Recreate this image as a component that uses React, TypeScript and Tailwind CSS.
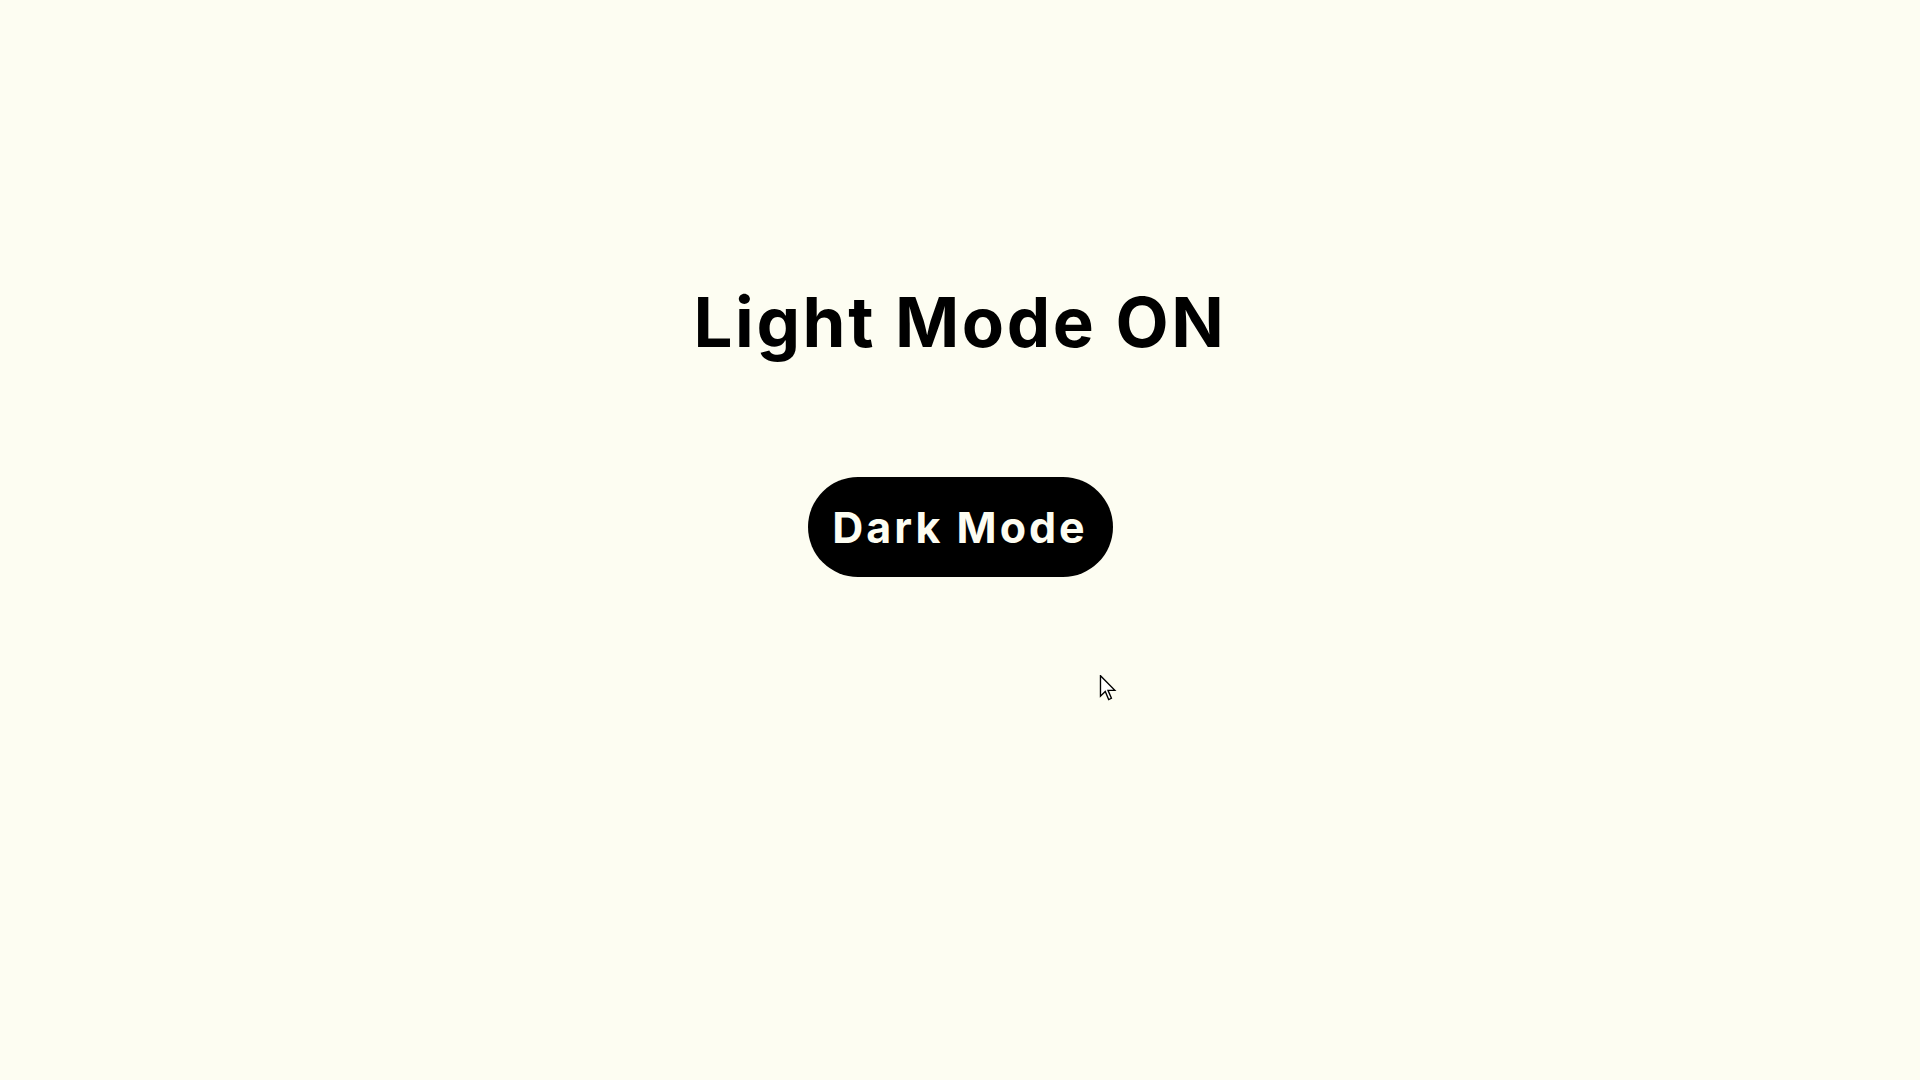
import React from "react";

export default function App() {
  return (
    <div className="relative min-h-screen w-full bg-[#fdfdf2] overflow-hidden">
      <div className="flex flex-col items-center pt-[282px]">
        <h1 className="font-['Inter',sans-serif] font-bold text-[69px] leading-[80px] tracking-[2.6px] text-black">
          Light Mode ON
        </h1>
        <button className="mt-[115px] h-[100px] w-[305px] rounded-full bg-black text-[#fdfdf2] font-['Inter',sans-serif] font-bold text-[43px] leading-none tracking-[3px]">
          Dark Mode
        </button>
      </div>
      <svg
        className="absolute left-[1099px] top-[675px]"
        width="18"
        height="26"
        viewBox="0 0 12 19"
      >
        <path
          d="M0.5 0.5 L0.5 15.5 L4 12 L6.5 18 L8.5 17 L6 11.2 L11 11.2 Z"
          fill="white"
          stroke="black"
          strokeWidth="1"
          strokeLinejoin="miter"
        />
      </svg>
    </div>
  );
}
